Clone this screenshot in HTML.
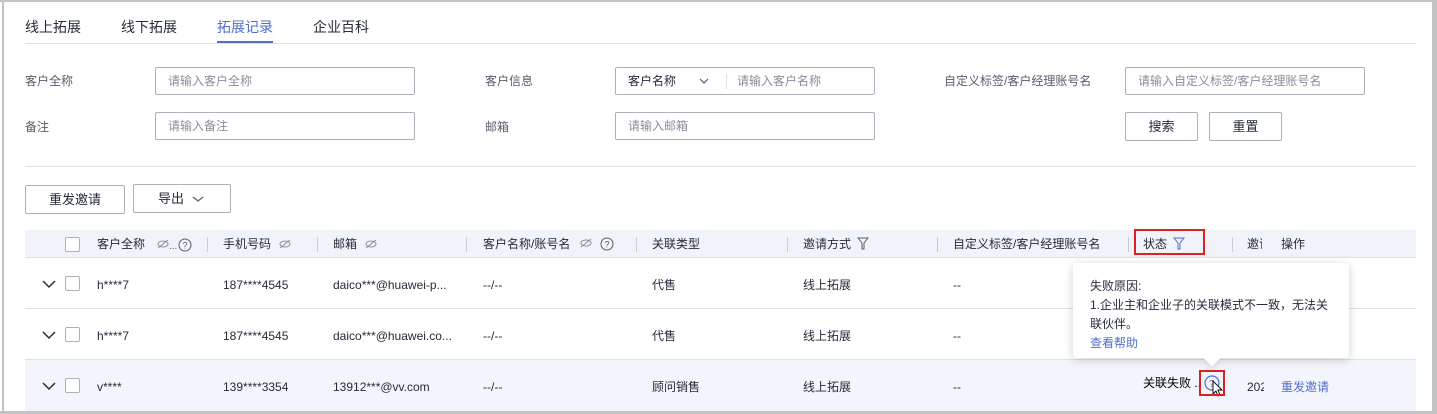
<!DOCTYPE html>
<html><head><meta charset="utf-8"><style>
*{margin:0;padding:0;box-sizing:border-box}
body{width:1437px;height:414px;overflow:hidden;background:#fff;font-family:"Liberation Sans","Noto Sans CJK SC",sans-serif;font-size:12px;color:#252b3a;position:relative}
.a{position:absolute;white-space:nowrap}
.inp{position:absolute;border:1px solid #adb0b8;border-radius:2px;height:28px;color:#8a8e99;padding-left:12px;line-height:26px;font-size:12px}
.btn{position:absolute;border:1px solid #adb0b8;border-radius:2px;height:29px;line-height:27px;text-align:center;font-size:13px;color:#252b3a}
.sep{position:absolute;top:237px;width:1px;height:15px;background:#c8ccd4}
.row{position:absolute;left:25px;width:1391px;height:51px;border-bottom:1px solid #dfe1e6}
.cb{position:absolute;width:15px;height:15px;border:1px solid #adb0b8;border-radius:2px;background:#fff}
.t{position:absolute;font-size:12px;line-height:14px;white-space:nowrap}
</style></head><body>
<div class="a" style="left:0;top:0;width:1437px;height:2px;background:#c4c4c4"></div>
<div class="a" style="left:2px;top:0;width:2px;height:414px;background:#c4c4c4"></div>
<div class="a" style="left:1432px;top:0;width:5px;height:414px;background:#c4c4c4"></div>
<div class="a" style="left:0;top:411px;width:1437px;height:3px;background:#c4c4c4"></div>

<div class="a" style="left:25px;top:17px;font-size:14px">线上拓展</div>
<div class="a" style="left:121px;top:17px;font-size:14px">线下拓展</div>
<div class="a" style="left:217px;top:17px;font-size:14px;color:#526ecc">拓展记录</div>
<div class="a" style="left:313px;top:17px;font-size:14px">企业百科</div>
<div class="a" style="left:25px;top:43px;width:1391px;height:1px;background:#dfe1e6"></div>
<div class="a" style="left:217px;top:41px;width:56px;height:2px;background:#526ecc"></div>

<div class="a" style="left:25px;top:72px;color:#575d6c">客户全称</div>
<div class="inp" style="left:155px;top:67px;width:260px">请输入客户全称</div>
<div class="a" style="left:485px;top:72px;color:#575d6c">客户信息</div>
<div class="inp" style="left:615px;top:67px;width:260px;color:#252b3a">客户名称
<svg style="position:absolute;left:83px;top:9px" width="10" height="8"><path d="M1 2l4 4 4-4" stroke="#575d6c" fill="none" stroke-width="1.2"/></svg>
<span style="position:absolute;left:110px;top:6px;width:1px;height:15px;background:#dfe1e6"></span>
<span style="position:absolute;left:121px;color:#8a8e99">请输入客户名称</span></div>
<div class="a" style="left:944px;top:72px;color:#575d6c">自定义标签/客户经理账号名</div>
<div class="inp" style="left:1125px;top:67px;width:240px">请输入自定义标签/客户经理账号名</div>

<div class="a" style="left:25px;top:118px;color:#575d6c">备注</div>
<div class="inp" style="left:155px;top:112px;width:260px">请输入备注</div>
<div class="a" style="left:485px;top:118px;color:#575d6c">邮箱</div>
<div class="inp" style="left:615px;top:112px;width:260px">请输入邮箱</div>
<div class="btn" style="left:1125px;top:112px;width:73px">搜索</div>
<div class="btn" style="left:1209px;top:112px;width:73px">重置</div>

<div class="a" style="left:25px;top:166px;width:1391px;height:1px;background:#dfe1e6"></div>
<div class="btn" style="left:25px;top:185px;width:100px">重发邀请</div>
<div class="btn" style="left:133px;top:184px;width:98px;text-align:left;padding-left:24px">导出<svg style="position:absolute;left:58px;top:10px" width="12" height="8"><path d="M1 2l5 4 5-4" stroke="#575d6c" fill="none" stroke-width="1.2"/></svg></div>

<div class="a" style="left:25px;top:230px;width:1391px;height:28px;background:#f0f3fa;border-bottom:1px solid #dfe1e6"></div>
<div class="cb" style="left:65px;top:237px"></div>
<div class="t" style="left:97px;top:237px">客户全称</div>
<svg class="a" style="left:157px;top:238px" width="36" height="14"><ellipse cx="6" cy="6" rx="5" ry="3" fill="none" stroke="#8a8e99"/><path d="M1 10L11 2" stroke="#8a8e99"/><text x="12" y="11" font-size="10" fill="#575d6c">...</text><circle cx="28" cy="7" r="6" fill="none" stroke="#575d6c"/><text x="25.5" y="10.5" font-size="9" fill="#575d6c">?</text></svg>
<div class="sep" style="left:207px"></div>
<div class="t" style="left:223px;top:237px">手机号码</div>
<svg class="a" style="left:279px;top:239px" width="12" height="10"><ellipse cx="6" cy="5" rx="5" ry="3" fill="none" stroke="#8a8e99"/><path d="M1 9L11 1" stroke="#8a8e99"/></svg>
<div class="sep" style="left:317px"></div>
<div class="t" style="left:333px;top:237px">邮箱</div>
<svg class="a" style="left:365px;top:239px" width="12" height="10"><ellipse cx="6" cy="5" rx="5" ry="3" fill="none" stroke="#8a8e99"/><path d="M1 9L11 1" stroke="#8a8e99"/></svg>
<div class="sep" style="left:466px"></div>
<div class="t" style="left:483px;top:237px">客户名称/账号名</div>
<svg class="a" style="left:580px;top:237px" width="36" height="14"><ellipse cx="6" cy="6" rx="5" ry="3" fill="none" stroke="#8a8e99"/><path d="M1 10L11 2" stroke="#8a8e99"/><circle cx="27" cy="7" r="6" fill="none" stroke="#575d6c"/><text x="24.5" y="10.5" font-size="9" fill="#575d6c">?</text></svg>
<div class="sep" style="left:636px"></div>
<div class="t" style="left:652px;top:237px">关联类型</div>
<div class="sep" style="left:787px"></div>
<div class="t" style="left:803px;top:237px">邀请方式</div>
<svg class="a" style="left:857px;top:237px" width="12" height="13"><path d="M1 1h10L7 6v6H5V6z" fill="none" stroke="#575d6c"/></svg>
<div class="sep" style="left:937px"></div>
<div class="t" style="left:953px;top:237px">自定义标签/客户经理账号名</div>
<div class="sep" style="left:1128px"></div>
<div class="t" style="left:1143px;top:237px">状态</div>
<svg class="a" style="left:1173px;top:237px" width="12" height="13"><path d="M1 1h10L7 6v6H5V6z" fill="none" stroke="#526ecc"/></svg>
<div class="a" style="left:1134px;top:229px;width:71px;height:26px;border:2px solid #e02020"></div>
<div class="sep" style="left:1232px"></div>
<div class="t" style="left:1247px;top:237px;width:15px;overflow:hidden">邀请</div>
<div class="t" style="left:1281px;top:237px">操作</div>

<div class="row" style="top:258px"></div>
<div class="row" style="top:309px"></div>
<div class="row" style="top:360px;background:#f3f5fc;border-bottom:none"></div>

<svg class="a" style="left:42px;top:280px" width="14" height="9"><path d="M1 1l6 6 6-6" stroke="#252b3a" fill="none" stroke-width="1.5"/></svg>
<div class="cb" style="left:65px;top:276px"></div>
<div class="t" style="left:97px;top:278px">h****7</div>
<div class="t" style="left:223px;top:278px">187****4545</div>
<div class="t" style="left:333px;top:278px">daico***@huawei-p...</div>
<div class="t" style="left:483px;top:278px">--/--</div>
<div class="t" style="left:652px;top:278px">代售</div>
<div class="t" style="left:803px;top:278px">线上拓展</div>
<div class="t" style="left:953px;top:278px">--</div>

<svg class="a" style="left:42px;top:331px" width="14" height="9"><path d="M1 1l6 6 6-6" stroke="#252b3a" fill="none" stroke-width="1.5"/></svg>
<div class="cb" style="left:65px;top:327px"></div>
<div class="t" style="left:97px;top:329px">h****7</div>
<div class="t" style="left:223px;top:329px">187****4545</div>
<div class="t" style="left:333px;top:329px">daico***@huawei.co...</div>
<div class="t" style="left:483px;top:329px">--/--</div>
<div class="t" style="left:652px;top:329px">代售</div>
<div class="t" style="left:803px;top:329px">线上拓展</div>
<div class="t" style="left:953px;top:329px">--</div>

<svg class="a" style="left:42px;top:382px" width="14" height="9"><path d="M1 1l6 6 6-6" stroke="#252b3a" fill="none" stroke-width="1.5"/></svg>
<div class="cb" style="left:65px;top:378px"></div>
<div class="t" style="left:97px;top:380px">v****</div>
<div class="t" style="left:223px;top:380px">139****3354</div>
<div class="t" style="left:333px;top:380px">13912***@vv.com</div>
<div class="t" style="left:483px;top:380px">--/--</div>
<div class="t" style="left:652px;top:380px">顾问销售</div>
<div class="t" style="left:803px;top:380px">线上拓展</div>
<div class="t" style="left:953px;top:380px">--</div>
<div class="t" style="left:1143px;top:376px;color:#000">关联失败 ..</div>
<svg class="a" style="left:1201px;top:373px" width="24" height="28"><circle cx="11" cy="10" r="7" fill="none" stroke="#526ecc" stroke-width="1.2"/><text x="8" y="14" font-size="10" fill="#526ecc">?</text><path d="M12 8v13l3-3 2 5 2-1-2-5h4z" fill="#fff" stroke="#000" stroke-width="0.9"/></svg>
<div class="a" style="left:1199px;top:370px;width:26px;height:26px;border:2px solid #e02020"></div>
<div class="t" style="left:1247px;top:380px;width:17px;overflow:hidden">2023</div>
<div class="t" style="left:1281px;top:380px;color:#526ecc">重发邀请</div>

<div class="a" style="left:1073px;top:263px;width:276px;height:95px;background:#fff;border-radius:4px;box-shadow:0 2px 10px rgba(0,0,0,0.18)"></div>
<div class="a" style="left:1206px;top:352px;width:12px;height:12px;background:#fff;transform:rotate(45deg);box-shadow:3px 3px 5px rgba(0,0,0,0.08)"></div>
<div class="a" style="left:1090px;top:277px;line-height:19px;font-size:12px;color:#252b3a;white-space:normal;width:240px">失败原因:<br>1.企业主和企业子的关联模式不一致，无法关联伙伴。<br><span style="color:#526ecc">查看帮助</span></div>
</body></html>
